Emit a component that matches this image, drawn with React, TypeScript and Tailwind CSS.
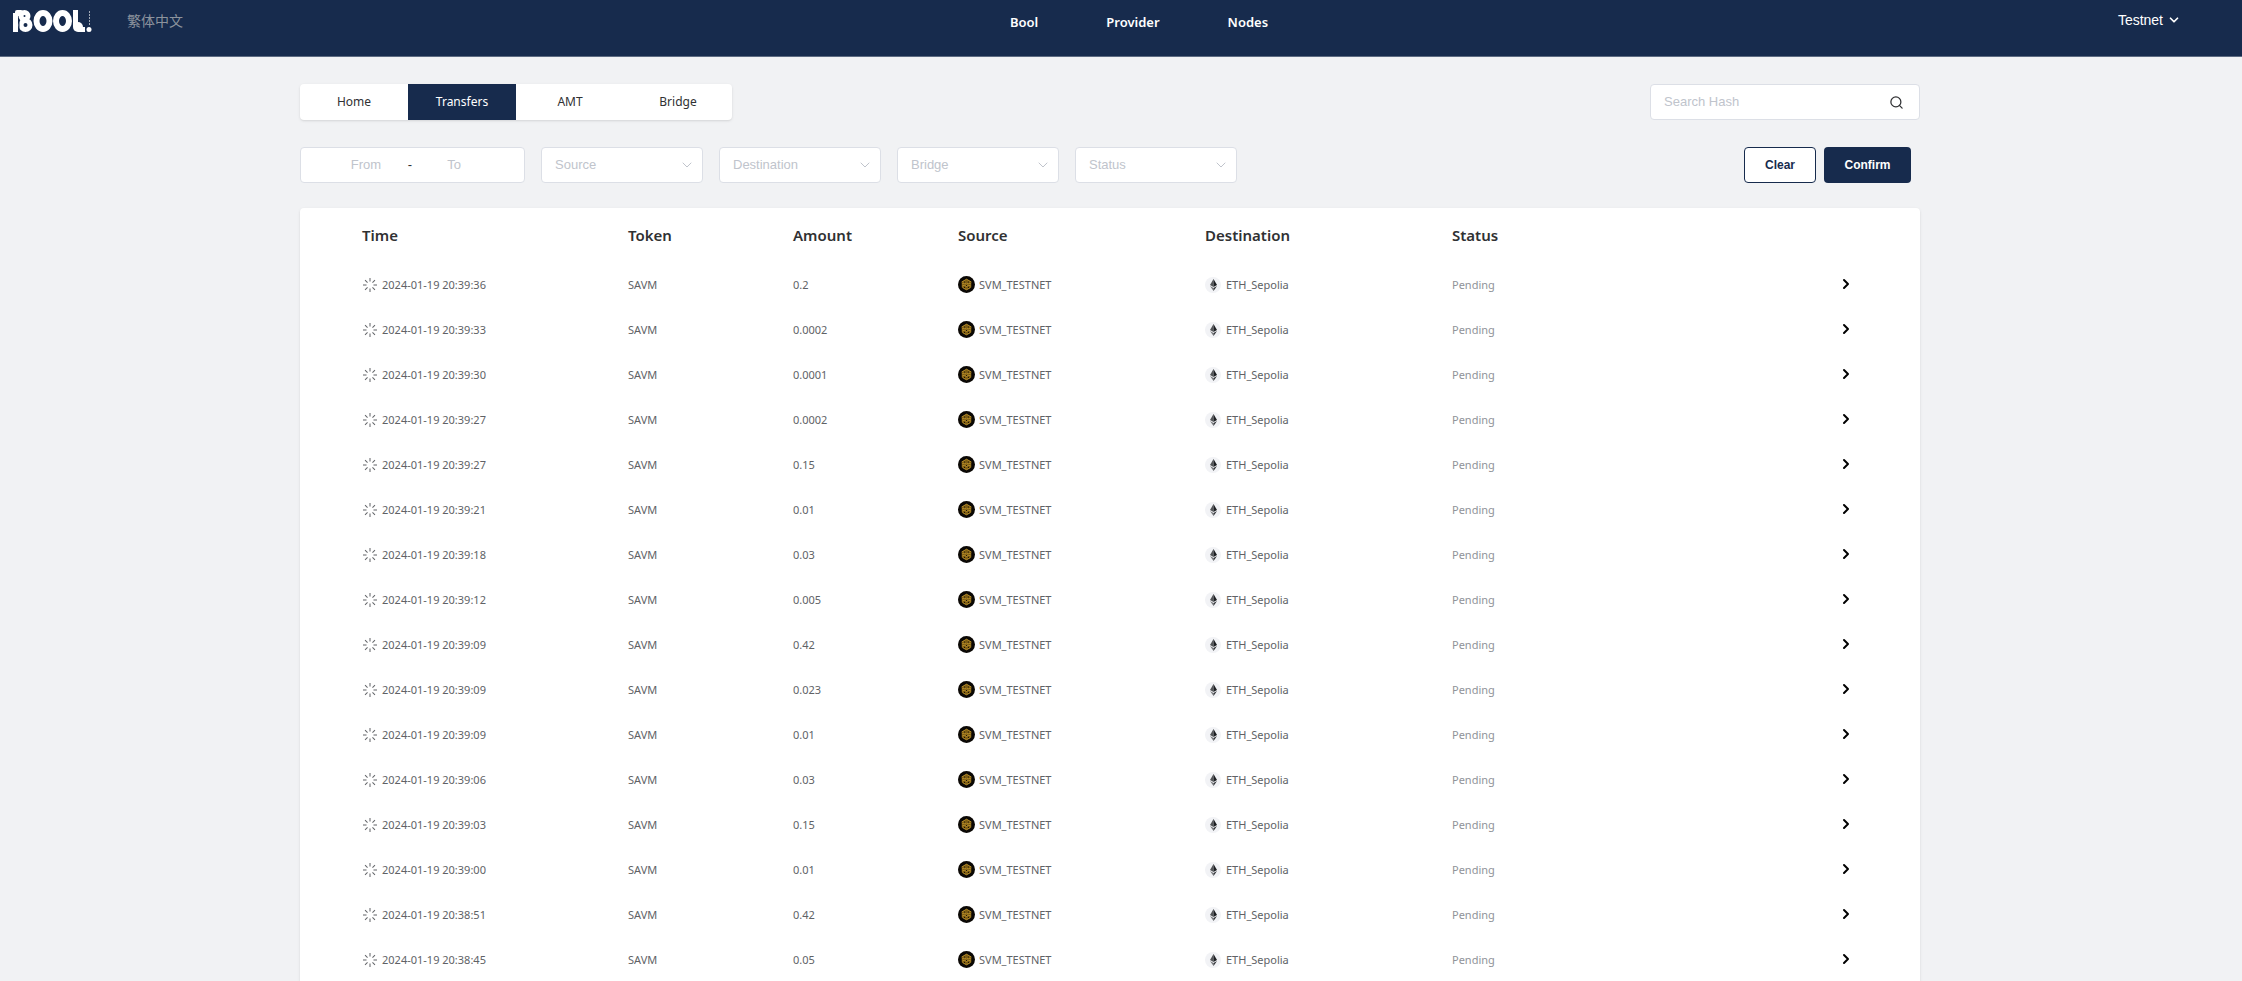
import { ChevronDown, ChevronRight, Search } from "lucide-react";

type Transfer = {
  time: string;
  amount: string;
};

const NAV_LINKS = ["Bool", "Provider", "Nodes"];
const TABS = ["Home", "Transfers", "AMT", "Bridge"];
const FILTERS = ["Source", "Destination", "Bridge", "Status"];

const TRANSFERS: Transfer[] = [
  { time: "2024-01-19 20:39:36", amount: "0.2" },
  { time: "2024-01-19 20:39:33", amount: "0.0002" },
  { time: "2024-01-19 20:39:30", amount: "0.0001" },
  { time: "2024-01-19 20:39:27", amount: "0.0002" },
  { time: "2024-01-19 20:39:27", amount: "0.15" },
  { time: "2024-01-19 20:39:21", amount: "0.01" },
  { time: "2024-01-19 20:39:18", amount: "0.03" },
  { time: "2024-01-19 20:39:12", amount: "0.005" },
  { time: "2024-01-19 20:39:09", amount: "0.42" },
  { time: "2024-01-19 20:39:09", amount: "0.023" },
  { time: "2024-01-19 20:39:09", amount: "0.01" },
  { time: "2024-01-19 20:39:06", amount: "0.03" },
  { time: "2024-01-19 20:39:03", amount: "0.15" },
  { time: "2024-01-19 20:39:00", amount: "0.01" },
  { time: "2024-01-19 20:38:51", amount: "0.42" },
  { time: "2024-01-19 20:38:45", amount: "0.05" },
];

export default function App() {
  return (
    <div className="min-h-screen bg-[#f1f2f4] font-['Noto_Sans','Noto_Sans_CJK_TC',sans-serif]">
      <Header />
      <main className="pt-[27px] pr-[322px] pl-[300px]">
        <div className="flex items-start justify-between">
          <Tabs />
          <SearchBox />
        </div>
        <FilterBar />
        <TransferTable />
      </main>
    </div>
  );
}

function Header() {
  return (
    <header className="flex h-[57px] items-start justify-between border-b border-[#5d6b82] bg-[#172b4d] pr-[61px] pl-[13px] text-white">
      <div className="flex flex-1 items-start">
        <a href="#" aria-label="Bool" className="pt-[9px]">
          <Logo />
        </a>
        <button
          type="button"
          className="ml-[34px] pt-[11px] font-['Liberation_Sans','Noto_Sans_CJK_SC',sans-serif] text-[14px] leading-5 text-[#8c939d]"
        >
          繁体中文
        </button>
      </div>
      <nav className="ml-[84px] flex gap-[68px] pt-3 text-[13px] leading-5 font-semibold">
        {NAV_LINKS.map((label) => (
          <a key={label} href="#">
            {label}
          </a>
        ))}
      </nav>
      <div className="flex flex-1 justify-end pt-[10px]">
        <button
          type="button"
          className="flex items-center gap-1 font-['Liberation_Sans',sans-serif] text-[14px] leading-5"
        >
          Testnet
          <ChevronDown className="size-[14px]" strokeWidth={3} />
        </button>
      </div>
    </header>
  );
}

function Tabs() {
  return (
    <div
      role="tablist"
      className="flex h-9 overflow-hidden rounded-sm bg-white shadow-sm"
    >
      {TABS.map((label) => (
        <button
          key={label}
          type="button"
          role="tab"
          aria-selected={label === "Transfers"}
          className={
            label === "Transfers"
              ? "w-[108px] bg-[#172b4d] text-[12px] text-white"
              : "w-[108px] text-[12px] text-[#303133]"
          }
        >
          {label}
        </button>
      ))}
    </div>
  );
}

function SearchBox() {
  return (
    <div className="flex h-9 w-[270px] items-center rounded-sm border border-[#dcdfe6] bg-white pr-[15px] pl-[13px]">
      <input
        type="text"
        aria-label="Search Hash"
        placeholder="Search Hash"
        className="min-w-0 flex-1 font-['Liberation_Sans',sans-serif] text-[13px] outline-none placeholder:text-[#c0c4cc]"
      />
      <button type="button" aria-label="Search">
        <Search className="size-[15px] text-[#303133]" strokeWidth={2} />
      </button>
    </div>
  );
}

function FilterBar() {
  return (
    <div className="mt-[27px] flex items-center justify-between pr-[9px] font-['Liberation_Sans',sans-serif] text-[13px]">
      <div className="flex gap-4">
        <div className="flex h-9 w-[225px] items-center rounded-sm border border-[#dcdfe6] bg-white pr-[30px] pl-[25px]">
          <input
            type="text"
            aria-label="From"
            placeholder="From"
            className="w-20 text-center outline-none placeholder:text-[#c0c4cc]"
          />
          <span className="flex-1 text-center text-[#303133]">-</span>
          <input
            type="text"
            aria-label="To"
            placeholder="To"
            className="w-20 text-center outline-none placeholder:text-[#c0c4cc]"
          />
        </div>
        {FILTERS.map((label) => (
          <div key={label} className="relative">
            <select
              aria-label={label}
              defaultValue=""
              className="h-9 w-[162px] appearance-none rounded-sm border border-[#dcdfe6] bg-white px-[13px] text-[#c0c4cc] outline-none"
            >
              <option value="">{label}</option>
            </select>
            <ChevronDown
              className="pointer-events-none absolute top-[10px] right-2 size-4 text-[#c0c4cc]"
              strokeWidth={1.5}
            />
          </div>
        ))}
      </div>
      <div className="flex gap-2 font-bold">
        <button
          type="button"
          className="h-9 w-[72px] rounded border border-[#172b4d] bg-white text-[12px] text-[#172b4d]"
        >
          Clear
        </button>
        <button
          type="button"
          className="h-9 w-[87px] rounded bg-[#172b4d] text-[12px] text-white"
        >
          Confirm
        </button>
      </div>
    </div>
  );
}

function TransferTable() {
  return (
    <section className="mt-[25px] rounded-t bg-white shadow-sm">
      <table className="w-full table-fixed text-left">
        <thead>
          <tr className="h-[54px] text-[15px] leading-5 text-[#303133]">
            <th className="w-[328px] pl-[62px] font-semibold">Time</th>
            <th className="w-[165px] font-semibold">Token</th>
            <th className="w-[165px] font-semibold">Amount</th>
            <th className="w-[247px] font-semibold">Source</th>
            <th className="w-[247px] font-semibold">Destination</th>
            <th className="w-[247px] font-semibold">Status</th>
            <th aria-label="Details" />
          </tr>
        </thead>
        <tbody className="text-[11px] leading-4 text-[#606266]">
          {TRANSFERS.map((transfer, index) => (
            <tr key={index} className="h-[45px]">
              <td className="pl-[62px]">
                <span className="flex items-center gap-1">
                  <PendingIcon />
                  {transfer.time}
                </span>
              </td>
              <td>SAVM</td>
              <td>{transfer.amount}</td>
              <td>
                <span className="flex items-center gap-1">
                  <SvmIcon />
                  SVM_TESTNET
                </span>
              </td>
              <td>
                <span className="flex items-center gap-1">
                  <EthIcon />
                  ETH_Sepolia
                </span>
              </td>
              <td className="text-[#909399]">Pending</td>
              <td className="pr-[66px] pb-[2px] text-right">
                <button
                  type="button"
                  aria-label="Open transfer"
                  className="align-middle text-black"
                >
                  <ChevronRight className="size-4" strokeWidth={3} />
                </button>
              </td>
            </tr>
          ))}
        </tbody>
      </table>
    </section>
  );
}

function Logo() {
  return (
    <svg width="80" height="24" viewBox="0 0 80 24" fill="none">
      <rect x="0" y="4" width="5" height="19" fill="#fff" />
      <rect x="2" y="1" width="8" height="6" rx="2" fill="#fff" />
      <g stroke="#fff" strokeWidth="5">
        <circle cx="11.5" cy="7" r="3.5" />
        <circle cx="12.5" cy="16" r="4.5" />
        <line x1="62.5" y1="1" x2="62.5" y2="18" />
        <line x1="65" y1="20.5" x2="72" y2="20.5" />
      </g>
      <g stroke="#fff" strokeWidth="6">
        <ellipse cx="30" cy="12" rx="6.5" ry="8" />
        <ellipse cx="49.5" cy="12" rx="6.5" ry="8" />
      </g>
      <line x1="6" y1="11" x2="6" y2="23" stroke="#172b4d" />
      <circle cx="65" cy="18" r="5" fill="#fff" />
      <circle cx="76" cy="20.5" r="2.5" fill="#fff" />
      <line
        x1="76.5"
        y1="2"
        x2="76.5"
        y2="16"
        stroke="#fff"
        strokeOpacity="0.6"
        strokeDasharray="2 1"
      />
    </svg>
  );
}

// Eight-spoke loading mark.
function PendingIcon() {
  return (
    <svg
      width="16"
      height="16"
      viewBox="0 0 16 16"
      stroke="#606266"
      className="shrink-0"
    >
      {[0, 45, 90, 135, 180, 225, 270, 315].map((angle) => (
        <line
          key={angle}
          x1="8"
          y1="1"
          x2="8"
          y2="4.5"
          transform={`rotate(${angle} 8 8)`}
        />
      ))}
    </svg>
  );
}

function SvmIcon() {
  return (
    <svg width="17" height="17" viewBox="0 0 17 17" className="shrink-0">
      <circle cx="8.5" cy="8.5" r="8.5" fill="#0b0805" />
      <path d="M8.5 3 13.3 5.700v5.600L8.5 14 3.700 11.300V5.700z" fill="#7d5d14" />
      <g fill="none" stroke="#c79a2e" strokeWidth="0.8">
        <path d="M3.700 6 8.5 3.200 13.300 6" />
        <path d="M4 8 6.200 7 8.500 8.200 10.800 7 13 8" />
        <path d="M4 10.200 6.200 9.200 8.500 10.400 10.800 9.200 13 10.200" />
        <path d="M4.500 11.600 8.500 13.800 12.500 11.600" />
      </g>
      <g fill="#0b0805">
        <circle cx="6.500" cy="6" r="0.600" />
        <circle cx="10.500" cy="6" r="0.600" />
        <circle cx="8.500" cy="9.300" r="0.600" />
        <circle cx="6.500" cy="11.300" r="0.600" />
        <circle cx="10.500" cy="11.300" r="0.600" />
      </g>
    </svg>
  );
}

function EthIcon() {
  return (
    <svg width="17" height="16" viewBox="0 0 17 16" className="shrink-0">
      <circle cx="8" cy="8" r="8" fill="#f2f3f6" />
      <path d="M8.5 2 5 8l3.5 2z" fill="#55575a" />
      <path d="M8.5 2v8L12 8z" fill="#1d1f22" />
      <path d="M5 9l3.5 5v-3z" fill="#77797c" />
      <path d="M12 9l-3.5 5v-3z" fill="#303236" />
    </svg>
  );
}
